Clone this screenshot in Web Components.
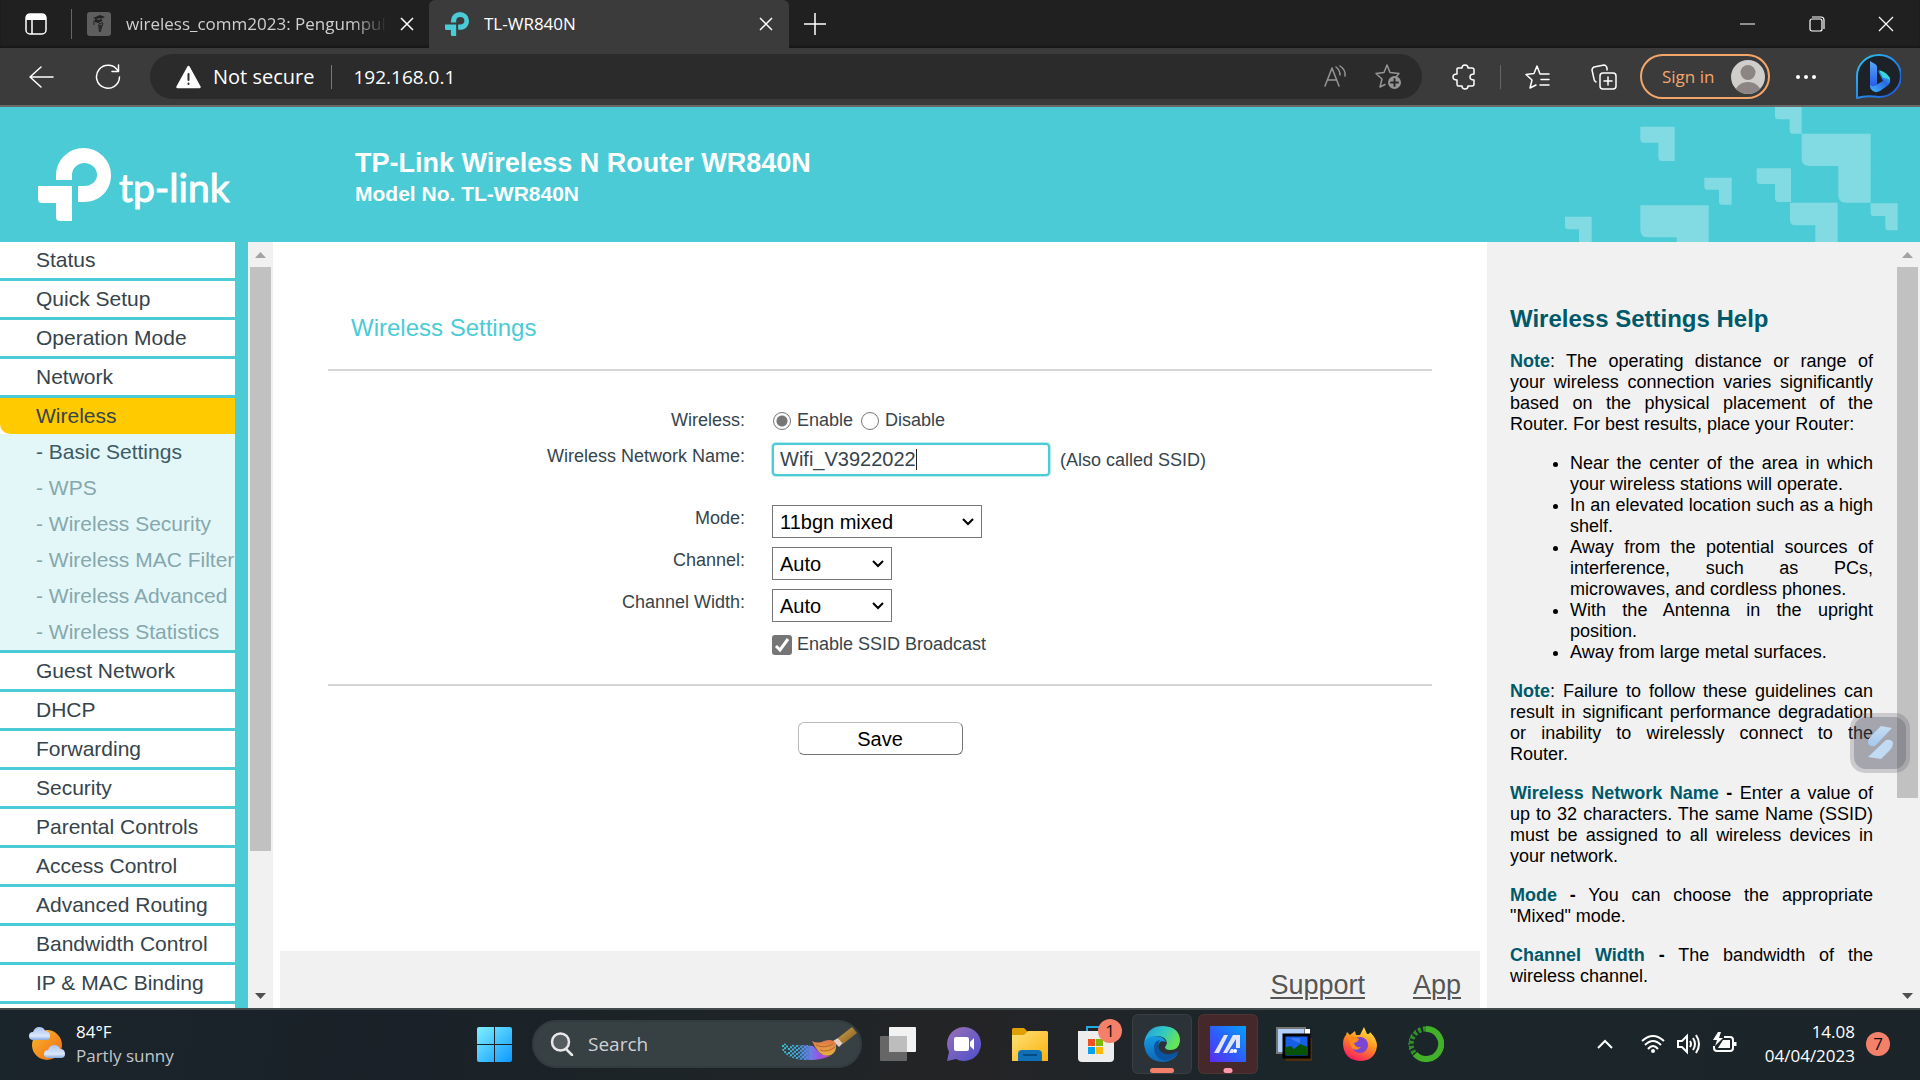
<!DOCTYPE html>
<html lang="en">
<head>
<meta charset="utf-8">
<title>TL-WR840N</title>
<style>
  html, body { margin: 0; height: 100%; }
  body {
    --teal: #4acbd6;
    --panel: #f1f1f1;
    --chrome-font: "Open Sans", "Noto Sans", sans-serif;
    font-family: "Liberation Sans", Arial, sans-serif;
    overflow: hidden;
  }
  desktop-screen { height: 100vh; }
</style>
</head>
<body>
<desktop-screen>
  <browser-tabs></browser-tabs>
  <browser-toolbar></browser-toolbar>
  <router-header>
    <span slot="title">TP-Link Wireless N Router WR840N</span>
    <span slot="model">Model No. TL-WR840N</span>
  </router-header>
  <router-body></router-body>
  <task-bar></task-bar>
</desktop-screen>

<script>
function define(name, markup) {
  const template = document.createElement('template');
  template.innerHTML = '<style>:host,*{box-sizing:border-box} button{background:none;border:0;padding:0;color:inherit;font:inherit;display:block} svg{display:block}</style>' + markup;
  customElements.define(name, class extends HTMLElement {
    constructor() {
      super();
      this.attachShadow({ mode: 'open' }).append(template.content.cloneNode(true));
    }
  });
}

const TP_MARK = '<path d="M18 32V27A27.500 27 0 0 1 73 27C73 43 61 54 46 54H40V38H46C54 38 59 33 59 27A12.500 12 0 0 0 34 27V32Z"/><path d="M0 38H34V73H22Q18 73 18 69V55H4Q0 55 0 51Z"/>';

define('desktop-screen', `
<style>
  :host { display: flex; flex-direction: column; }
  ::slotted(router-body) { flex: 1; min-height: 0; }
</style><slot></slot>`);

/* ---------- browser chrome ---------- */
define('browser-tab', `
<style>
  :host { display: flex; align-items: center; height: 48px; color: #cfcfcf; font: 17px/24px var(--chrome-font); }
  :host([active]) { background: #3b3b3b; color: #fff; border-radius: 6px 6px 0 0; }
  .title { flex: 1; min-width: 0; margin-left: 15px; white-space: nowrap; overflow: hidden; }
  :host(:not([active])) .title { -webkit-mask-image: linear-gradient(90deg, #000 86%, transparent 100%); }
  button { margin-left: 12px; color: #fff; }
</style>
<slot name="icon"></slot><span class="title"><slot></slot></span>
<button aria-label="Close tab"><svg width="14" height="14" viewBox="0 0 14 14" fill="none" stroke="currentColor" stroke-width="1.500"><path d="M1 1 13 13M13 1 1 13"/></svg></button>`);

define('browser-tabs', `
<style>
  :host { display: flex; align-items: center; height: 48px; background: #202020; color: #fff; box-shadow: inset 0 -2px 2px #181818; }
  .panel { margin: 0 23px 0 24px; }
  .sep { width: 1px; height: 30px; background: #666; margin-right: 15px; }
  browser-tab:not([active]) { width: 342px; padding-right: 15px; }
  browser-tab[active] { width: 360px; padding: 0 16px; }
  .new { margin-left: 15px; }
  .window { display: flex; margin-left: auto; }
  .window button { width: 69px; height: 48px; display: grid; place-items: center; }
</style>
<button class="panel" aria-label="Tab actions"><svg width="24" height="24" viewBox="0 0 24 24"><rect x="2" y="2" width="20" height="20" rx="4" fill="none" stroke="#fff" stroke-width="1.500"/><path d="M2 8V5Q2 2 5 2H19Q22 2 22 5V8Z" fill="#fff"/><path d="M8 8V22" stroke="#fff" stroke-width="1.500"/></svg></button>
<span class="sep"></span>
<browser-tab><svg slot="icon" width="24" height="24" viewBox="0 0 24 24"><rect width="24" height="24" rx="3" fill="#5e5e5e"/><path d="M6 6 13 3 18 5 12 8ZM8 7V10Q11 12 15 9V6" fill="#222"/><path d="M7 8V13M11 10 13 12 16 10M12 12 13 19M16 11 14 17" stroke="#222" fill="none"/><path d="M11 13H15L14 20H12Z" fill="#2c2c2c"/></svg>wireless_comm2023: Pengumpula</browser-tab>
<browser-tab active><svg slot="icon" width="24" height="24" viewBox="0 0 73 73" fill="#4acbd6">${TP_MARK}</svg>TL-WR840N</browser-tab>
<button class="new" aria-label="New tab"><svg width="22" height="22" viewBox="0 0 22 22" stroke="#fff" stroke-width="1.500"><path d="M11 0V22M0 11H22"/></svg></button>
<div class="window">
  <button aria-label="Minimize"><svg width="16" height="16" stroke="#fff"><path d="M0 8H15"/></svg></button>
  <button aria-label="Restore"><svg width="16" height="16" fill="none" stroke="#fff" stroke-width="1.200"><rect x="1" y="3" width="12" height="12" rx="2"/><path d="M3 1H12Q15 1 15 4V13"/></svg></button>
  <button aria-label="Close"><svg width="16" height="16" stroke="#fff" stroke-width="1.200"><path d="M1 1 15 15M15 1 1 15"/></svg></button>
</div>`);

define('browser-toolbar', `
<style>
  :host { display: flex; align-items: center; height: 59px; padding: 0 19px 0 28px; background: #3b3b3b; border-bottom: 2px solid #686868; color: #fff; font: 19px/26px var(--chrome-font); }
  svg { fill: none; stroke: currentColor; stroke-width: 1.500; stroke-linecap: round; stroke-linejoin: round; }
  .refresh { margin: 0 29px 0 41px; }
  .address { flex: 1; display: flex; align-items: center; height: 45px; border-radius: 23px; background: #2b2b2b; padding: 0 20px 0 26px; }
  .secure { display: flex; align-items: center; gap: 12px; font-size: 20px; }
  .address .sep { margin: 0 21px 0 17px; background: #777; }
  .sep { width: 1px; height: 24px; background: #666; }
  input { flex: 1; min-width: 0; background: none; border: 0; padding: 0; color: #fff; font: inherit; }
  .address .dim { color: #969696; }
  .dim + .dim { margin-left: 28px; }
  .ext { margin: 0 24px 0 30px; }
  .fav { margin: 0 41px 0 24px; }
  .sign { display: flex; align-items: center; justify-content: space-between; width: 130px; height: 45px; margin: 0 25px 0 23px; padding: 0 3px 0 20px; border: 2px solid #f4a66a; border-radius: 23px; color: #f4a66a; font-size: 17px; }
  .bing { margin-left: 39px; }
</style>
<button aria-label="Back"><svg width="26" height="26" viewBox="0 0 26 26"><path d="M13 3 2 13 13 23M2 13H25"/></svg></button>
<button class="refresh" aria-label="Refresh"><svg width="26" height="26" viewBox="0 0 26 26"><path d="M23 7A11.500 11.500 0 1 0 24.500 13M23.500 1V7.500H17"/></svg></button>
<div class="address">
  <button class="secure"><svg width="25" height="24" viewBox="0 0 25 24"><path d="M12.500 2 23.500 22H1.500Z" fill="#fff" stroke-width="2.500"/><path d="M12.500 9V15M12.500 18.500V19" stroke="#2b2b2b" stroke-width="2"/></svg>Not secure</button>
  <span class="sep"></span>
  <input aria-label="Address" value="192.168.0.1">
  <button class="dim" aria-label="Read aloud"><svg width="24" height="26" viewBox="0 0 24 26"><path d="M2 22 9 4 16 22M4.500 16H13.500M13 3Q17 6 17 11M17 2Q23 6 22 12"/></svg></button>
  <button class="dim" aria-label="Add to favorites"><svg width="27" height="27" viewBox="0 0 27 27"><path d="M12 2 15 9.500 24 10.500 21 14M12 2 9 9.500 1 10.500 7 16 5 24 10 21.500"/><circle cx="19.500" cy="19.500" r="6.500" fill="#969696" stroke="none"/><path d="M19.500 16V23M16 19.500H23" stroke="#2b2b2b" stroke-width="2"/></svg></button>
</div>
<button class="ext" aria-label="Extensions"><svg width="24" height="26" viewBox="0 0 24 26"><path d="M5 5Q5 4 6 4H10Q10 1 13 1 16 1 16 4H20Q22 4 22 6V10Q18 10 18 13 18 16 22 16V20Q22 22 20 22H16Q16 25 13 25 10 25 10 22H6Q5 22 5 20V16Q1 16 1 13 1 10 5 10Z"/></svg></button>
<span class="sep"></span>
<button class="fav" aria-label="Favorites"><svg width="25" height="26" viewBox="0 0 25 26"><path d="M24 10H15L12 2 9 9.500 1 10.500 7 16 5 24 11 21M16 15.500H24M15 21H24"/></svg></button>
<button aria-label="Collections"><svg width="26" height="26" viewBox="0 0 26 26"><rect x="9" y="9" width="16" height="16" rx="3"/><path d="M17 13V21M13 17H21M5 18Q3 17 3 15L1 6Q1 4 3 3L13 1Q15 1 16 4L16 6"/></svg></button>
<button class="sign">Sign in<svg width="34" height="34" viewBox="0 0 34 34"><clipPath id="c"><circle cx="17" cy="17" r="17"/></clipPath><g clip-path="url(#c)" stroke="none"><rect width="34" height="34" fill="#d0cecb"/><circle cx="17" cy="12.500" r="7.500" fill="#8b8683"/><ellipse cx="17" cy="33" rx="13" ry="11" fill="#8b8683"/></g></svg></button>
<button aria-label="Settings and more"><svg width="22" height="22" viewBox="0 0 22 22"><g fill="#fff" stroke="none"><circle cx="3" cy="11" r="2"/><circle cx="11" cy="11" r="2"/><circle cx="19" cy="11" r="2"/></g></svg></button>
<button class="bing" aria-label="Discover"><svg width="45" height="45" viewBox="0 0 45 45"><defs><linearGradient id="r" x1="0" y1="0" x2="1" y2="1"><stop stop-color="#2fc6ee"/><stop offset="1" stop-color="#1b50e0"/></linearGradient><linearGradient id="b" x1="0" y1="0" x2="0" y2="1"><stop stop-color="#54a8f8"/><stop offset="1" stop-color="#2050e8"/></linearGradient><linearGradient id="t" x1="0" y1="1" x2="1" y2="0"><stop stop-color="#40b8f8"/><stop offset=".600" stop-color="#2868e8"/><stop offset="1" stop-color="#35d5e5"/></linearGradient></defs><path d="M1 44V22A22 21 0 1 1 23 43Q10 41 1 44Z" fill="#1d2128" stroke="url(#r)" stroke-width="2"/><g stroke="none"><path d="M14 7 19 10Q21 11 21 13V30L16 36Q14 35 14 32Z" fill="url(#b)"/><path d="M14 30Q15 34 20 31L27 27 22 17Q33 20 34 25 35 29 31 32L24 37Q18 40 15 35 14 33 14 30Z" fill="url(#t)"/><path d="M23 16Q33 19 34 26 32 24 27 24Z" fill="#36d6de"/></g></svg></button>`);

/* ---------- router pages ---------- */
const bracket = (x, y, x2, y2, arm, leg) => {
  const r = Math.round((x2 - x) / 9);
  return `M${x} ${y}H${x2}V${y2}H${leg + r}Q${leg} ${y2} ${leg} ${y2 - r}V${arm}H${x + r}Q${x} ${arm} ${x} ${arm - r}Z`;
};
const PATTERN = [
  [705, 21, 785, 101, 58, 749], [785, 101, 992, 308, 198, 895], [301, 80, 404, 183, 128, 355],
  [493, 233, 575, 314, 269, 537], [650, 205, 753, 306, 252, 705], [750, 308, 893, 450, 376, 826],
  [992, 310, 1073, 391, 348, 1036], [301, 316, 506, 520, 412, 410], [75, 350, 155, 430, 388, 117]
].map(a => bracket(...a)).join('');

define('router-header', `
<style>
  :host { display: flex; height: 135px; background: var(--teal); color: #fff; font-weight: bold; }
  .logo { display: flex; width: 355px; padding: 41px 0 0 38px; }
  .logo span { margin: 15px 0 0 8px; font: 39px/48px Lato, sans-serif; -webkit-text-stroke: 1px #fff; }
  .names { flex: 1; padding-top: 40px; }
  .title { font-size: 27px; line-height: 32px; }
  .model { font-size: 21px; line-height: 30px; }
</style>
<div class="logo"><svg width="73" height="73" viewBox="0 0 73 73" fill="#fff">${TP_MARK}</svg><span>tp-link</span></div>
<div class="names"><div class="title"><slot name="title"></slot></div><div class="model"><slot name="model"></slot></div></div>
<svg width="355" height="135" viewBox="75 21 1065 405" fill="#82dbe3"><path d="${PATTERN}"/></svg>`);

define('frame-scrollbar', `
<style>
  :host { display: flex; flex-direction: column; width: 25px; background: var(--panel); }
  svg { width: 25px; height: 25px; flex: none; }
  .thumb { flex: var(--thumb) 0 0; margin: 0 2px; background: #c1c1c1; }
  .rest { flex: var(--rest) 0 0; }
</style>
<svg viewBox="0 0 25 25" fill="#a3a3a3"><path d="M7 16 12.500 10 18 16Z"/></svg>
<div class="thumb"></div><div class="rest"></div>
<svg viewBox="0 0 25 25" fill="#505050"><path d="M7 10H18L12.500 16Z"/></svg>`);

define('menu-item', `
<style>
  :host { display: block; background: #fff; color: #36444b; }
  a { display: block; height: 36px; padding-left: 36px; font-size: 21px; line-height: 35px; white-space: nowrap; overflow: hidden; color: inherit; text-decoration: none; }
  :host([open]) a { background: #ffcb00; border-radius: 0 0 0 10px; }
  :host([sub]) { background: none; color: #86a7ac; }
  :host([sub][current]) { color: #3d5b63; }
</style>
<a href="#"><slot></slot></a>`);

define('router-menu', `
<style>
  :host { display: block; width: 248px; padding-right: 13px; background: var(--teal); overflow: hidden; }
  nav { display: flex; flex-direction: column; gap: 3px; }
  .sub { background: #e3f7f9; }
</style>
<nav>
  <menu-item>Status</menu-item><menu-item>Quick Setup</menu-item><menu-item>Operation Mode</menu-item><menu-item>Network</menu-item>
  <div><menu-item open>Wireless</menu-item>
    <div class="sub">
      <menu-item sub current>- Basic Settings</menu-item><menu-item sub>- WPS</menu-item><menu-item sub>- Wireless Security</menu-item>
      <menu-item sub>- Wireless MAC Filter</menu-item><menu-item sub>- Wireless Advanced</menu-item><menu-item sub>- Wireless Statistics</menu-item>
    </div>
  </div>
  <menu-item>Guest Network</menu-item><menu-item>DHCP</menu-item><menu-item>Forwarding</menu-item><menu-item>Security</menu-item>
  <menu-item>Parental Controls</menu-item><menu-item>Access Control</menu-item><menu-item>Advanced Routing</menu-item>
  <menu-item>Bandwidth Control</menu-item><menu-item>IP &amp; MAC Binding</menu-item><menu-item></menu-item>
</nav>`);

define('wireless-settings', `
<style>
  :host { display: flex; flex-direction: column; background: #fff; color: #36444b; font-size: 18px; line-height: 22px; }
  main { flex: 1; padding: 72px 55px 0; }
  h1 { margin: 0 0 27px 23px; font-size: 24px; line-height: 28px; font-weight: normal; color: var(--teal); }
  hr { margin: 0; border: 0; height: 2px; background: #d6d6d6; }
  form { display: flex; flex-direction: column; }
  .rows { display: flex; flex-direction: column; gap: 9px; padding: 36px 0 20px; }
  .row { display: grid; grid-template-columns: 417px 1fr; column-gap: 27px; min-height: 33px; }
  .row.short { min-height: 27px; }
  .row.name { margin-bottom: 20px; }
  .row > :first-child { text-align: right; padding-top: 2px; }
  .field { display: flex; align-items: flex-start; }
  .field label { padding: 2px 7px 0 5px; }
  .field .hint { padding: 6px 0 0 10px; }
  input[type=text], select { height: 33px; margin: 0; font: 20px/24px "Liberation Sans", Arial, sans-serif; border-radius: 0; }
  input[type=text] { width: 278px; padding: 0 6px; color: #36444b; border: 2px solid var(--teal); border-radius: 4px; outline: 0; caret-color: transparent;
    box-shadow: 0 0 0 1px rgba(74, 203, 214, .400);
    background: linear-gradient(#222, #222) 142px 4px / 1px 21px no-repeat #fff; }
  select { appearance: none; border: 1px solid #767676; padding: 0 7px; color: #000; width: 120px;
    background: url("data:image/svg+xml,%3Csvg xmlns='http://www.w3.org/2000/svg' width='14' height='10'%3E%3Cpath d='M2 2l5 5 5-5' fill='none' stroke='black' stroke-width='2'/%3E%3C/svg%3E") right 6px center no-repeat #fff; }
  select.wide { width: 210px; }
  input[type=radio] { appearance: none; width: 18px; height: 18px; margin: 5px 1px 0; border: 1px solid #767676; border-radius: 50%; background: #fff; }
  input[type=radio]:checked { background: radial-gradient(circle, #767676 5px, #fff 6px); }
  input[type=checkbox] { appearance: none; width: 20px; height: 20px; margin: 4px 0 0; border-radius: 3px;
    background: url("data:image/svg+xml,%3Csvg xmlns='http://www.w3.org/2000/svg' width='20' height='20'%3E%3Cpath d='M4 11l4 4L16 4' fill='none' stroke='white' stroke-width='3'/%3E%3C/svg%3E") #767676; }
  .save { align-self: center; width: 165px; height: 33px; margin-top: 36px; font-size: 20px; color: #000; text-align: center; border: 1px solid; border-color: #bbb #767676 #767676 #bbb; border-radius: 6px; }
  footer { display: flex; justify-content: flex-end; gap: 48px; height: 57px; margin: 0 7px; padding: 18px 19px 0 0; background: var(--panel); font-size: 27px; line-height: 32px; }
  footer a { color: #555; text-decoration-thickness: 2px; text-underline-offset: 3px; }
</style>
<main>
  <h1>Wireless Settings</h1>
  <hr>
  <form>
    <div class="rows">
      <div class="row short"><span>Wireless:</span><div class="field"><input type="radio" name="radio" id="on" checked><label for="on">Enable</label><input type="radio" name="radio" id="off"><label for="off">Disable</label></div></div>
      <div class="row name"><label for="ssid">Wireless Network Name:</label><div class="field"><input type="text" id="ssid" value="Wifi_V3922022"><span class="hint">(Also called SSID)</span></div></div>
      <div class="row"><label for="mode">Mode:</label><div class="field"><select id="mode" class="wide"><option>11bgn mixed</option></select></div></div>
      <div class="row"><label for="channel">Channel:</label><div class="field"><select id="channel"><option>Auto</option></select></div></div>
      <div class="row"><label for="width">Channel Width:</label><div class="field"><select id="width"><option>Auto</option></select></div></div>
      <div class="row"><span></span><div class="field"><input type="checkbox" id="cast" checked><label for="cast">Enable SSID Broadcast</label></div></div>
    </div>
    <hr>
    <button type="button" class="save">Save</button>
  </form>
</main>
<footer><a href="#">Support</a><a href="#">App</a></footer>`);

define('help-panel', `
<style>
  :host { display: block; width: 408px; padding: 63px 22px 0 23px; background: var(--panel); color: #000; font-size: 18px; line-height: 21px; overflow: hidden; }
  h2 { margin: 0 0 18px; font-size: 24px; line-height: 28px; color: #00596a; }
  p, ul { margin: 0 0 18px; text-align: justify; }
  ul { padding-left: 60px; }
  b { color: #00596a; }
  b + b { color: #000; }
</style>
<h2>Wireless Settings Help</h2>
<p><b>Note</b>: The operating distance or range of your wireless connection varies significantly based on the physical placement of the Router. For best results, place your Router:</p>
<ul>
  <li>Near the center of the area in which your wireless stations will operate.</li>
  <li>In an elevated location such as a high shelf.</li>
  <li>Away from the potential sources of interference, such as PCs, microwaves, and cordless phones.</li>
  <li>With the Antenna in the upright position.</li>
  <li>Away from large metal surfaces.</li>
</ul>
<p><b>Note</b>: Failure to follow these guidelines can result in significant performance degradation or inability to wirelessly connect to the Router.</p>
<p><b>Wireless Network Name</b> <b>-</b> Enter a value of up to 32 characters. The same Name (SSID) must be assigned to all wireless devices in your network.</p>
<p><b>Mode</b> <b>-</b> You can choose the appropriate "Mixed" mode.</p>
<p><b>Channel Width</b> <b>-</b> The bandwidth of the wireless channel.</p>`);

define('floating-widget', `
<style>
  :host { position: absolute; right: 10px; bottom: 235px; width: 60px; height: 60px; padding: 4px; border-radius: 15px; background: rgba(90, 90, 105, .250); }
  button { width: 52px; height: 52px; border-radius: 12px; background: rgba(80, 80, 95, .300); }
</style>
<button aria-label="Quick launch"><svg width="52" height="52" viewBox="0 0 52 52"><defs><linearGradient id="g" x1="0" y1="0" x2="0" y2="1"><stop stop-color="#c6def4"/><stop offset="1" stop-color="#a5c8ee"/></linearGradient></defs><path d="M27 9 38 11 21 29Q14 30 14 25 14 22 17 19Z" fill="url(#g)"/><path d="M14 40 32 23Q38 22 39 26 39 30 36 33L27 42Z" fill="#c2dbf4"/></svg></button>`);

define('router-body', `
<style>
  :host { display: flex; position: relative; background: #fff; }
  wireless-settings { flex: 1; min-width: 0; }
  .left { --thumb: 584; --rest: 132; }
  .right { --thumb: 531; --rest: 185; }
</style>
<router-menu></router-menu><frame-scrollbar class="left"></frame-scrollbar>
<wireless-settings></wireless-settings>
<help-panel></help-panel><frame-scrollbar class="right"></frame-scrollbar>
<floating-widget></floating-widget>`);

/* ---------- desktop task bar ---------- */
define('task-button', `
<style>
  :host { display: block; position: relative; width: 60px; height: 60px; }
  button { width: 60px; height: 60px; display: grid; place-items: center; border-radius: 6px; }
  :host([running]) button { background: var(--tile, #2b3338); box-shadow: inset 0 0 0 1px rgba(255,255,255,.060); }
  :host([running])::after { content: ""; position: absolute; bottom: 1px; left: 50%; width: var(--bar, 24px); height: 5px; border-radius: 3px; background: var(--bar-color, #f4806a); transform: translateX(-50%); }
  .badge { position: absolute; right: 4px; top: 5px; }
</style>
<button><slot></slot></button><span class="badge"><slot name="badge"></slot></span>`);

define('count-badge', `
<style>:host { display: block; width: 24px; height: 24px; border-radius: 50%; background: #f4806a; color: #111; font: 17px/24px var(--chrome-font); text-align: center; }</style><slot></slot>`);

const brushDots = (() => {
  let s = '';
  for (let i = 0; i < 13; i++) for (let j = 0; j < 9; j++)
    if ((i + j) % 2 === 0 && !(i < 4 && (j + i * 3) % 5 === 0)) s += `M${1 + i * 2} ${14 + j * 2 + i * 0.300}h2v2h-2z`;
  return s;
})();

define('task-bar', `
<style>
  :host { display: grid; grid-template-columns: 1fr auto 1fr; align-items: center; height: 72px; padding-bottom: 2px; border-top: 2px solid #424a4c; background: linear-gradient(100deg, #1a252b, #1a2128 22%, #1c2427 34%, #242426 51%, #1b262b 66%, #1b2529); color: #fff; font: 17px/24px var(--chrome-font); }
  .weather { display: flex; align-items: center; gap: 11px; padding-left: 29px; text-align: left; }
  .weather small { display: block; font-size: 17px; color: #c3c7c9; }
  .apps { display: flex; gap: 6px; }
  .search { display: flex; align-items: center; width: 330px; height: 48px; margin: 6px 0 0 2px; padding: 0 3px 0 16px; border: 2px solid #323b3e; border-radius: 24px; background: #374043; }
  .search input { flex: 1; min-width: 0; margin: 0 0 0 14px; padding: 0; border: 0; background: none; font: 19px/26px var(--chrome-font); }
  .search input::placeholder { color: #cfd2d3; }
  .tray { display: flex; align-items: center; justify-content: flex-end; padding-right: 30px; }
  .tray svg { fill: none; stroke: #fff; stroke-width: 2; margin-right: 12px; }
  .tray .up { margin-right: 28px; }
  .clock { text-align: right; margin: 0 11px 0 16px; }
  .edge { --bar: 24px; }
  .asus { --tile: #45282a; --bar: 9px; --bar-color: #ff9aac; }
</style>
<button class="weather"><svg width="36" height="36" viewBox="0 0 36 36"><defs><linearGradient id="sun" x1="0" y1="0" x2="1" y2="1"><stop stop-color="#f8b830"/><stop offset="1" stop-color="#f06a10"/></linearGradient><linearGradient id="cl" x1="0" y1="0" x2="0" y2="1"><stop stop-color="#a9c2f2"/><stop offset=".700" stop-color="#dbe7fb"/><stop offset="1" stop-color="#86a9e4"/></linearGradient></defs><circle cx="18" cy="19" r="15" fill="url(#sun)"/><path id="cloud" d="M4 14Q0 14 0 10 0 6 4 6 6 1 10 1 15 1 16 5 21 5 21 10 21 14 17 14Z" fill="url(#cl)"/><use href="#cloud" x="15" y="18"/></svg><span>84°F<small>Partly sunny</small></span></button>
<div class="apps">
  <task-button><svg width="35" height="35" viewBox="0 0 35 35"><defs><linearGradient id="w" gradientUnits="userSpaceOnUse" x1="0" y1="0" x2="35" y2="35"><stop stop-color="#80f0ff"/><stop offset="1" stop-color="#0c98ff"/></linearGradient></defs><path d="M2 0H17V17H0V2Q0 0 2 0ZM18 0H33Q35 0 35 2V17H18ZM0 18H17V35H2Q0 35 0 33ZM18 18H35V33Q35 35 33 35H18Z" fill="url(#w)"/></svg></task-button>
  <div class="search">
    <svg width="24" height="24" viewBox="0 0 24 24" fill="#555d60" stroke="#e8e8e8" stroke-width="2.500"><circle cx="10.500" cy="10" r="8.500"/><path d="M16 17 22 23" stroke-linecap="round"/></svg>
    <input type="text" aria-label="Search" placeholder="Search">
    <svg width="76" height="34" viewBox="0 0 76 34"><defs><linearGradient id="p" x1="0" y1="0" x2="1" y2="0"><stop stop-color="#4d8fe6" stop-opacity=".300"/><stop offset=".350" stop-color="#6a7fe6"/><stop offset=".650" stop-color="#9a52e0"/><stop offset="1" stop-color="#c646ba"/></linearGradient><linearGradient id="d" gradientUnits="userSpaceOnUse" x1="0" y1="0" x2="27" y2="0"><stop stop-color="#32c5d2"/><stop offset="1" stop-color="#4d8fe6"/></linearGradient><linearGradient id="h" x1="0" y1="0" x2="1" y2="1"><stop stop-color="#d4a54d"/><stop offset="1" stop-color="#80571c"/></linearGradient><linearGradient id="br" x1="0" y1="0" x2="0" y2="1"><stop stop-color="#e0754c"/><stop offset="1" stop-color="#e5b23c"/></linearGradient><clipPath id="k"><path d="M0 16Q14 19 28 18V33Q14 34 6 28Q0 24 0 16Z"/></clipPath></defs><path clip-path="url(#k)" d="${brushDots}" fill="url(#d)"/><path d="M20 18 32 19 40 27 49 29Q40 33 30 33 24 33 19 32Z" fill="url(#p)"/><path d="M52 14 58 20 62 16 57 11Z" fill="#e5cec0"/><path d="M57 11 71 0 76 6 62 17Z" fill="url(#h)"/><path d="M31 14Q37 17 43 14 52 11 55 17 56 25 50 28 43 30 38 25 34 21 31 14Z" fill="url(#br)"/><path d="M35 18Q43 22 52 17M39 23Q46 26 54 20" fill="none" stroke="#b9652f"/></svg>
  </div>
  <task-button><svg width="36" height="34" viewBox="0 0 36 34"><rect x="9" width="27" height="25" rx="1" fill="#f2f2f2"/><rect y="9" width="27" height="25" rx="1" fill="#666"/><path d="M9 9H27V25H9Z" fill="#bdbdbd"/></svg></task-button>
  <task-button><svg width="34" height="34" viewBox="0 0 34 34"><defs><linearGradient id="ch" x1="0" y1="0" x2="1" y2="1"><stop stop-color="#9a70b4"/><stop offset="1" stop-color="#4c50ce"/></linearGradient></defs><path d="M17 0A17 17 0 1 1 9 32L0 34 2 25A17 17 0 0 1 17 0Z" fill="url(#ch)"/><rect x="7" y="10" width="15" height="14" rx="2" fill="#fff"/><path d="M23 15 27 11V23L23 19Z" fill="#fff"/></svg></task-button>
  <task-button><svg width="36" height="33" viewBox="0 0 36 33"><defs><linearGradient id="fo" x1="0" y1="0" x2="1" y2="1"><stop stop-color="#ffe078"/><stop offset="1" stop-color="#f8b30d"/></linearGradient></defs><path d="M0 1 1 0H12L16 4V9H0Z" fill="#dfa000"/><path d="M0 7H12L16 3H35L36 4V33H0Z" fill="url(#fo)"/><path d="M6 33V26Q6 22 10 22H26Q30 22 30 26V33Z" fill="#0f70b8"/><path d="M11 27H25" stroke="#074b84" stroke-width="2"/></svg></task-button>
  <task-button><svg width="36" height="36" viewBox="0 0 36 36"><path d="M9 10V1H26V10" fill="none" stroke="#28a8e0" stroke-width="2"/><path d="M0 5H36V32Q36 36 32 36H4Q0 36 0 32Z" fill="#ededed"/><path d="M10 13H17V20H10Z" fill="#f05022"/><path d="M18 13H25V20H18Z" fill="#7fba00"/><path d="M10 21H17V28H10Z" fill="#02a4ef"/><path d="M18 21H25V28H18Z" fill="#ffb902"/></svg><count-badge slot="badge">1</count-badge></task-button>
  <task-button class="edge" running><svg width="36" height="36" viewBox="0 0 36 36"><defs><linearGradient id="e1" x1="0" y1="0" x2="1" y2=".400"><stop stop-color="#2499dd"/><stop offset=".550" stop-color="#30c9c4"/><stop offset="1" stop-color="#66e456"/></linearGradient><linearGradient id="e2" x1="0" y1="0" x2="0" y2="1"><stop stop-color="#159be0"/><stop offset="1" stop-color="#0c66ba"/></linearGradient></defs><path d="M1 13Q5 0 19 0 36 1 36 15 35 24 26 24 21 24 21 21 22 20 23 17 22 10 13 10 5 10 0 18Z" fill="url(#e1)"/><path d="M0 18Q2 10 11 10 20 10 22 16 15 13 14 21 15 31 27 31 31 31 34 28 28 36 18 36 2 35 0 18Z" fill="url(#e2)"/><path d="M10 21Q10 15 16 14 13 19 15 23 18 29 26 28 30 28 34 25 34 29 29 32 24 35 18 34 10 31 10 21Z" fill="#0d54a0"/></svg></task-button>
  <task-button class="asus" running><svg width="36" height="36" viewBox="0 0 36 36"><defs><linearGradient id="as" x1="0" y1="1" x2="1" y2="0"><stop stop-color="#5b2cf0"/><stop offset=".500" stop-color="#2a62fa"/><stop offset="1" stop-color="#05a0fb"/></linearGradient></defs><rect width="36" height="36" fill="url(#as)"/><path d="M4 27 14 9H18L9 27ZM13 27 23 9H30V22H26V13L17 27ZM19 27 21 23H23V27Z" fill="#e2e6fb"/><circle cx="25" cy="25" r="2" fill="#fff"/></svg></task-button>
  <task-button><svg width="36" height="36" viewBox="0 0 36 36"><rect x="1" y="2" width="28" height="25" fill="#b2d0fa" stroke="#777" stroke-width="2"/><rect x="29" y="3" width="5" height="5" fill="#fff"/><path d="M10 12H36V35H10Z" fill="#50300c"/><rect x="8" y="9" width="25" height="22" fill="#1660e8" stroke="#000" stroke-width="3"/><path d="M10 21 15 20 18 23 24 18 32 21V29H10Z" fill="#075407"/><path d="M14 12H24V17L19 15Z" fill="#3b78f8"/></svg></task-button>
  <task-button><svg width="36" height="36" viewBox="0 0 36 36"><defs><linearGradient id="ff" x1=".800" y1="0" x2=".300" y2="1"><stop stop-color="#fff044"/><stop offset=".450" stop-color="#ff9320"/><stop offset="1" stop-color="#f81864"/></linearGradient></defs><path d="M1 18Q1 12 4 9L5 6 8 9 13 5 14 9 18 9 22 1 25 8Q28 8 28 6 35 13 35 20 33 35 18 35 2 34 1 18Z" fill="url(#ff)"/><circle cx="18" cy="19" r="8" fill="#7946d5"/><path d="M5 11Q11 9 17 13 16 16 12 17 13 22 19 21 15 26 10 22Z" fill="#ff8a1d"/></svg></task-button>
  <task-button><svg width="36" height="36" viewBox="0 0 36 36" fill="none"><path d="M18 3A15 15 0 1 1 7 28" stroke="#43b02a" stroke-width="6"/><path d="M18 3A15 15 0 0 0 7 28" stroke="#2f8e28" stroke-width="5" stroke-dasharray="3 2"/><path d="M17 1A17 17 0 0 0 5 29" stroke="#43b02a" stroke-dasharray="2 3"/></svg></task-button>
</div>
<div class="tray">
  <button aria-label="Show hidden icons"><svg class="up" width="16" height="10" viewBox="0 0 16 10"><path d="M1 9 8 2 15 9"/></svg></button>
  <svg width="24" height="24" viewBox="0 0 24 24"><path d="M1 9Q12 -1 23 9M4 13Q12 5 20 13M7 17Q12 11 17 17"/><circle cx="12" cy="19" r="2" fill="#fff" stroke="none"/></svg>
  <svg width="24" height="24" viewBox="0 0 24 24"><path d="M1 9H5L10 4V20L5 15H1ZM13 9Q15 12 13 15M16 6Q20 12 16 18M19 3Q25 12 19 21"/></svg>
  <svg width="24" height="24" viewBox="0 0 24 24"><path d="M11 5H17Q20 5 20 8V16Q20 19 17 19H4Q1 19 1 16V14"/><path d="M22 10V14" stroke-width="3"/><path d="M10 8H17V16H5Z" fill="#fff" stroke="none"/><path d="M5 0 0 8H4L2 14 10 6H6L8 0Z" fill="#fff" stroke="none"/></svg>
  <div class="clock">14.08<br>04/04/2023</div>
  <count-badge>7</count-badge>
</div>`);
</script>
</body>
</html>
